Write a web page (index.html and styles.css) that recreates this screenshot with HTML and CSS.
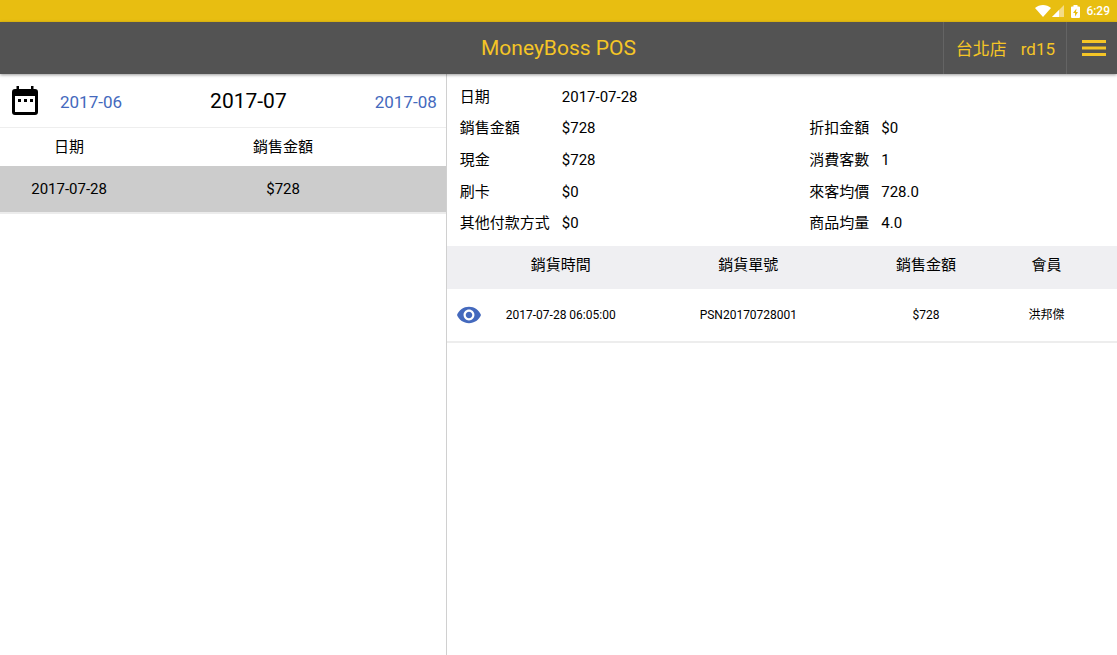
FILE: index.html
```html
<!DOCTYPE html>
<html lang="zh-Hant">
<head>
<meta charset="utf-8">
<meta name="viewport" content="width=device-width, initial-scale=1">
<title>MoneyBoss POS</title>
<link rel="stylesheet" href="styles.css">
</head>
<body>
<div class="status">
  <svg class="status-wifi" viewBox="0 0 16 12" aria-hidden="true"><path d="M0 3C4.500-1 11.500-1 16 3L8 12z" fill="#fff"/></svg>
  <svg class="status-signal" viewBox="0 0 12 12" aria-hidden="true"><path d="M12 0v12H0z" fill="#f4dc86"/><path d="M7 5v7H0z" fill="#fff"/></svg>
  <svg class="status-battery" viewBox="0 0 9 13" aria-hidden="true"><path d="M2.500 0h4v1.500H8q1 0 1 1V12q0 1-1 1H1q-1 0-1-1V2.500q0-1 1-1h1.500z" fill="#fff"/><path d="M5.500 3.500L2 8h2v3.500L7 7H5z" fill="#e8be11"/></svg>
  <span>6:29</span>
</div>
<header class="bar">
  <h1 class="bar-title">MoneyBoss POS</h1>
  <div class="bar-user"><span>台北店</span><span>rd15</span></div>
  <button class="bar-menu" type="button" aria-label="Menu"><svg viewBox="0 0 24 16" aria-hidden="true"><path d="M0 0h24v3H0zM0 6.500h24v3H0zM0 13h24v3H0z"/></svg></button>
</header>
<main class="panes">
  <section class="days">
    <nav class="months">
      <button class="calendar" type="button" aria-label="Calendar"><svg viewBox="0 0 26 29" aria-hidden="true"><path fill-rule="evenodd" d="M4.500 0h2.500v3h12V0h2.500v3H23q3 0 3 3v20q0 3-3 3H3q-3 0-3-3V6q0-3 3-3h1.500zM3 10v16h20V10z"/><path d="M6 13h3v3H6zM12 13h3v3h-3zM18 13h3v3h-3z"/></svg></button>
      <a class="month" href="#2017-06">2017-06</a>
      <h2 class="month-current">2017-07</h2>
      <a class="month" href="#2017-08">2017-08</a>
    </nav>
    <table class="day-table">
      <colgroup><col class="day-date"><col class="day-amount"><col></colgroup>
      <thead><tr><th>日期</th><th>銷售金額</th><th></th></tr></thead>
      <tbody><tr><td>2017-07-28</td><td>$728</td><td></td></tr></tbody>
    </table>
  </section>
  <section class="detail">
    <dl class="summary">
      <dt>日期</dt><dd class="wide">2017-07-28</dd>
      <dt>銷售金額</dt><dd>$728</dd><dt>折扣金額</dt><dd>$0</dd>
      <dt>現金</dt><dd>$728</dd><dt>消費客數</dt><dd>1</dd>
      <dt>刷卡</dt><dd>$0</dd><dt>來客均價</dt><dd>728.0</dd>
      <dt>其他付款方式</dt><dd>$0</dd><dt>商品均量</dt><dd>4.0</dd>
    </dl>
    <table class="orders">
      <colgroup><col class="order-view"><col class="order-time"><col class="order-id"><col class="order-amount"><col class="order-member"><col></colgroup>
      <thead><tr><th></th><th>銷貨時間</th><th>銷貨單號</th><th>銷售金額</th><th>會員</th><th></th></tr></thead>
      <tbody><tr>
        <td><button class="view" type="button" aria-label="View"><svg viewBox="1 4 22 16" aria-hidden="true"><path d="M12 4.500C7 4.500 2.730 7.610 1 12c1.730 4.390 6 7.500 11 7.500s9.270-3.110 11-7.500c-1.730-4.390-6-7.500-11-7.500zM12 17c-2.760 0-5-2.240-5-5s2.240-5 5-5 5 2.240 5 5-2.240 5-5 5zm0-8c-1.660 0-3 1.340-3 3s1.340 3 3 3 3-1.340 3-3-1.340-3-3-3z"/></svg></button></td>
        <td>2017-07-28 06:05:00</td><td>PSN20170728001</td><td>$728</td><td>洪邦傑</td><td></td>
      </tr></tbody>
    </table>
  </section>
</main>
</body>
</html>
```
FILE: styles.css
```css
* { box-sizing: border-box; }

body {
  margin: 0;
  min-height: 100vh;
  display: flex;
  flex-direction: column;
  background: #fff;
  color: #000;
  font: 15px/20px Roboto, "Noto Sans CJK TC", sans-serif;
}

button {
  padding: 0;
  border: 0;
  background: none;
  color: inherit;
  font: inherit;
  cursor: pointer;
}

svg { display: block; fill: currentColor; }
table { width: 100%; table-layout: fixed; border-collapse: collapse; }
th, td { padding: 0; font-weight: 400; text-align: center; }

.status {
  height: 22px;
  padding: 0 7px;
  display: flex;
  align-items: center;
  justify-content: flex-end;
  background: #e8be11;
  color: #fff;
  font-size: 12px;
  font-weight: 500;
}
.status-wifi { width: 16px; height: 12px; }
.status-signal { width: 12px; height: 12px; margin: 0 7px 0 1px; }
.status-battery { width: 9px; height: 13px; margin-right: 6px; }

.bar {
  height: 52px;
  display: grid;
  grid-template-columns: 1fr auto 1fr;
  grid-template-rows: 100%;
  background: #535353;
  color: #f5c526;
  box-shadow: 0 1px 3px rgba(0, 0, 0, 0.4);
  z-index: 1;
}
.bar-title {
  grid-column: 2;
  align-self: center;
  margin: 0;
  font-size: 21px;
  font-weight: 400;
  line-height: 52px;
}
.bar-user {
  grid-row: 1;
  grid-column: 3;
  justify-self: end;
  margin-right: 50px;
  padding: 2px 11px 0 12px;
  display: flex;
  align-items: center;
  gap: 14px;
  border: solid #646464;
  border-width: 0 1px;
  font-size: 17px;
}
.bar-menu {
  grid-row: 1;
  grid-column: 3;
  justify-self: end;
  width: 50px;
  padding-left: 15px;
}
.bar-menu svg { width: 24px; height: 16px; }

.panes {
  flex: 1;
  display: grid;
  grid-template-columns: 40% 60%;
}
.days { border-right: 1px solid #d0d0d0; }

.months {
  height: 54px;
  padding: 0 9px 0 12px;
  display: flex;
  align-items: center;
  justify-content: space-between;
  border-bottom: 1px solid #eee;
}
.calendar svg { width: 26px; height: 29px; }
.month {
  padding-top: 2px;
  color: #4469bd;
  font-size: 17px;
  line-height: 24px;
  text-decoration: none;
}
.calendar + .month { margin-left: 22px; }
.month-current {
  flex: 1;
  margin: 0;
  font-size: 21px;
  font-weight: 400;
  text-align: center;
}

.day-table th { height: 38px; }
.day-table td {
  height: 47px;
  background: #ccc;
  border-bottom: 2px solid #ececec;
}
.day-date { width: 31%; }
.day-amount { width: 65%; }

.summary {
  height: 172px;
  margin: 0;
  padding: 7px 13px;
  display: grid;
  grid-template-columns: 102px 10fr 72px 9fr;
  grid-auto-rows: 1fr;
  align-items: center;
}
.summary dd { margin: 0; }
.summary .wide { grid-column: span 3; }

.orders th {
  height: 43px;
  padding-bottom: 6px;
  background: #efeff2;
}
.orders td {
  height: 53px;
  border-bottom: 2px solid #ededed;
  font-size: 12px;
}
.order-view { width: 6%; }
.order-time { width: 22%; }
.order-id { width: 34%; }
.order-amount { width: 19%; }
.order-member { width: 17%; }
.view {
  display: block;
  margin-left: 10px;
  color: #4469bd;
}
.view svg { width: 24px; height: 18px; }
```
